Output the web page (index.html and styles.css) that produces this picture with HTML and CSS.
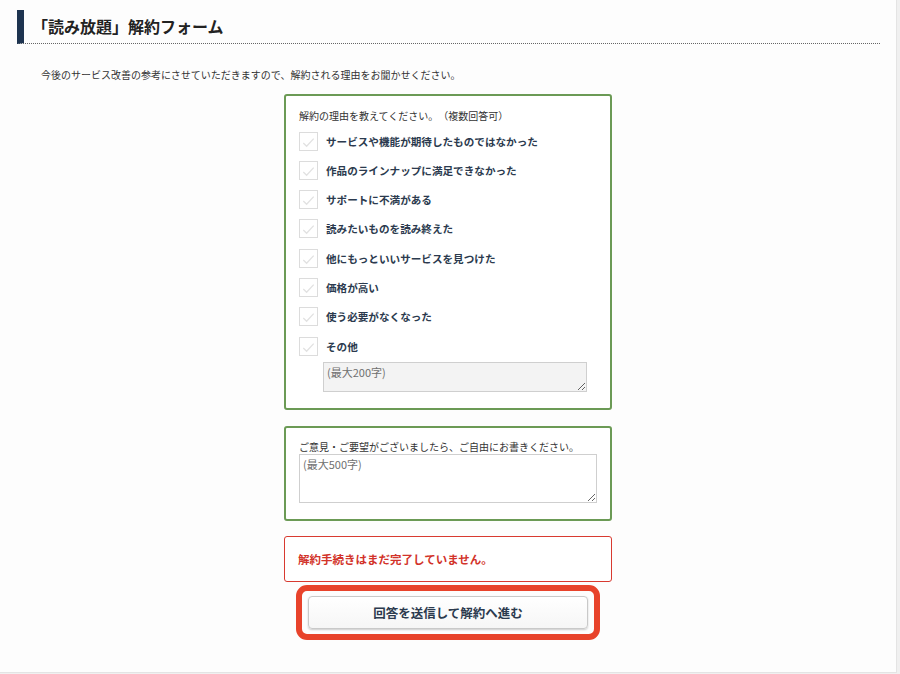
FILE: index.html
```html
<!DOCTYPE html>
<html lang="ja">
<head>
    <meta charset="UTF-8">
    <meta name="viewport" content="width=device-width, initial-scale=1.0">
    <title>「読み放題」解約フォーム</title>
    <link rel="stylesheet" href="styles.css">
</head>
<body>
    <div class="page">
        <h1 class="page-title">「読み放題」解約フォーム</h1>
        <p class="intro">今後のサービス改善の参考にさせていただきますので、解約される理由をお聞かせください。</p>

        <form class="cancel-form">
            <div class="form-box">
                <p class="box-label">解約の理由を教えてください。（複数回答可）</p>
                <ul class="reason-list">
                    <li class="reason"><span class="check"><svg viewBox="0 0 18 18"><polyline points="3.5,10.5 7,14 14.5,6"/></svg></span>サービスや機能が期待したものではなかった</li>
                    <li class="reason"><span class="check"><svg viewBox="0 0 18 18"><polyline points="3.5,10.5 7,14 14.5,6"/></svg></span>作品のラインナップに満足できなかった</li>
                    <li class="reason"><span class="check"><svg viewBox="0 0 18 18"><polyline points="3.5,10.5 7,14 14.5,6"/></svg></span>サポートに不満がある</li>
                    <li class="reason"><span class="check"><svg viewBox="0 0 18 18"><polyline points="3.5,10.5 7,14 14.5,6"/></svg></span>読みたいものを読み終えた</li>
                    <li class="reason"><span class="check"><svg viewBox="0 0 18 18"><polyline points="3.5,10.5 7,14 14.5,6"/></svg></span>他にもっといいサービスを見つけた</li>
                    <li class="reason"><span class="check"><svg viewBox="0 0 18 18"><polyline points="3.5,10.5 7,14 14.5,6"/></svg></span>価格が高い</li>
                    <li class="reason"><span class="check"><svg viewBox="0 0 18 18"><polyline points="3.5,10.5 7,14 14.5,6"/></svg></span>使う必要がなくなった</li>
                    <li class="reason"><span class="check"><svg viewBox="0 0 18 18"><polyline points="3.5,10.5 7,14 14.5,6"/></svg></span>その他</li>
                </ul>
                <textarea class="other-text" placeholder="(最大200字)" disabled></textarea>
            </div>

            <div class="form-box opinion-box">
                <p class="box-label">ご意見・ご要望がございましたら、ご自由にお書きください。</p>
                <textarea class="opinion-text" placeholder="(最大500字)"></textarea>
            </div>

            <div class="notice">解約手続きはまだ完了していません。</div>

            <div class="submit-ring">
                <button type="button" class="submit-btn">回答を送信して解約へ進む</button>
            </div>
        </form>
    </div>
</body>
</html>
```

FILE: styles.css
```css
* {
    margin: 0;
    padding: 0;
    box-sizing: border-box;
}
body {
    font-family: "Noto Sans CJK JP", "Noto Sans", sans-serif;
    background-color: #f0f0f0;
    color: #333;
    text-spacing-trim: space-all;
}
.page {
    width: 897px;
    height: 673px;
    background-color: #fdfdfd;
    border-right: 1px solid #e4e4e4;
    border-bottom: 1px solid #e4e4e4;
    padding-top: 10px;
}
.page-title {
    margin: 0 16px 0 17px;
    padding: 7px 0 8px 8px;
    border-left: 7px solid #1e3450;
    border-bottom: 1px dotted #666;
    font-size: 16px;
    line-height: 18px;
    font-weight: bold;
    color: #222;
}
.intro {
    margin: 23px 0 0 41px;
    font-size: 10px;
    line-height: 16px;
    color: #333;
}
.cancel-form {
    width: 328px;
    margin: 11px auto 0;
}
.form-box {
    border: 2px solid #6b9a55;
    border-radius: 3px;
    background-color: #fff;
    padding: 12px 0 16px 13px;
}
.box-label {
    font-size: 10px;
    line-height: 16px;
    color: #333;
}
.reason-list {
    list-style: none;
    margin-top: 8px;
    display: flex;
    flex-direction: column;
    gap: 11.3px;
}
.reason {
    display: flex;
    align-items: center;
    height: 18px;
    font-size: 10.6px;
    font-weight: bold;
    color: #2b3a4e;
}
.check {
    width: 19px;
    height: 19px;
    margin-right: 8px;
    border: 1px solid #dcdcdc;
    background-color: #fff;
    flex-shrink: 0;
}
.check svg {
    display: block;
    width: 100%;
    height: 100%;
    fill: none;
    stroke: #e2e2e2;
    stroke-width: 1.4;
}
textarea {
    display: block;
    font-family: inherit;
    font-size: 11px;
    line-height: 14px;
    padding: 2px 3px;
    border: 1px solid #cfcfcf;
    border-radius: 0;
    color: #333;
}
textarea::placeholder {
    color: #6f6f6f;
}
.other-text {
    margin: 7px 0 0 24px;
    width: 264px;
    height: 30px;
    background-color: #f3f3f3;
}
.opinion-box {
    margin-top: 16px;
}
.opinion-box .box-label {
    line-height: 14px;
}
.opinion-text {
    width: 298px;
    height: 49px;
    background-color: #fff;
}
.notice {
    margin-top: 15px;
    height: 46px;
    display: flex;
    align-items: center;
    padding-left: 13px;
    border: 1.5px solid #d83a30;
    border-radius: 3px;
    background-color: #fff;
    color: #d2332a;
    font-size: 11.5px;
    font-weight: bold;
}
.submit-ring {
    width: 304px;
    margin: 3px auto 0;
    padding: 5px 6px;
    border: 6px solid #e8432b;
    border-radius: 11px;
}
.submit-btn {
    display: block;
    width: 100%;
    height: 33px;
    font-family: inherit;
    font-size: 12.5px;
    font-weight: bold;
    color: #2b3a4e;
    background: linear-gradient(#ffffff, #f6f6f6);
    border: 1px solid #c9c9c9;
    border-radius: 4px;
    box-shadow: 0 1px 2px rgba(0, 0, 0, 0.2);
    cursor: pointer;
}
```
